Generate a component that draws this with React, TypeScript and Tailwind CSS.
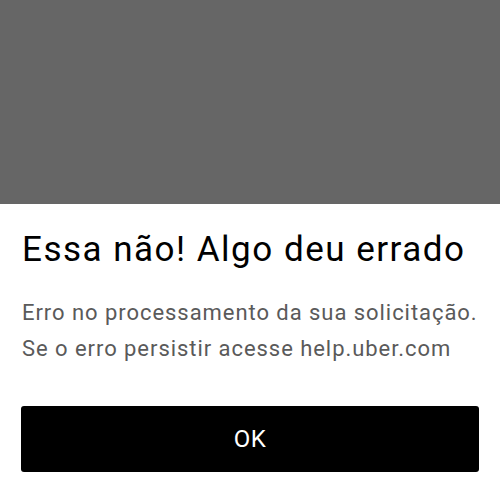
import React from "react";

export default function App() {
  return (
    <div className="w-[500px] h-[500px] bg-white flex flex-col overflow-hidden font-['Roboto','Liberation_Sans',sans-serif]">
      <div className="h-[204px] bg-[#666666] shrink-0" />
      <div className="flex flex-col px-[21px]">
        <h1 className="mt-[24px] ml-[1px] text-[35px] leading-[44px] tracking-[1.5px] font-normal text-black">Essa não! Algo deu errado</h1>
        <p className="mt-[23px] ml-[1px] text-[22px] leading-[36px] tracking-[0.95px] text-[#5a5a5a]">
          Erro no processamento da sua solicitação.
          <br />
          Se o erro persistir acesse help.uber.com
        </p>
        <button className="mt-[39px] h-[66px] w-full rounded-[3px] bg-black text-white text-[24px] font-normal tracking-[0.5px] flex items-center justify-center">
          OK
        </button>
      </div>
    </div>
  );
}
